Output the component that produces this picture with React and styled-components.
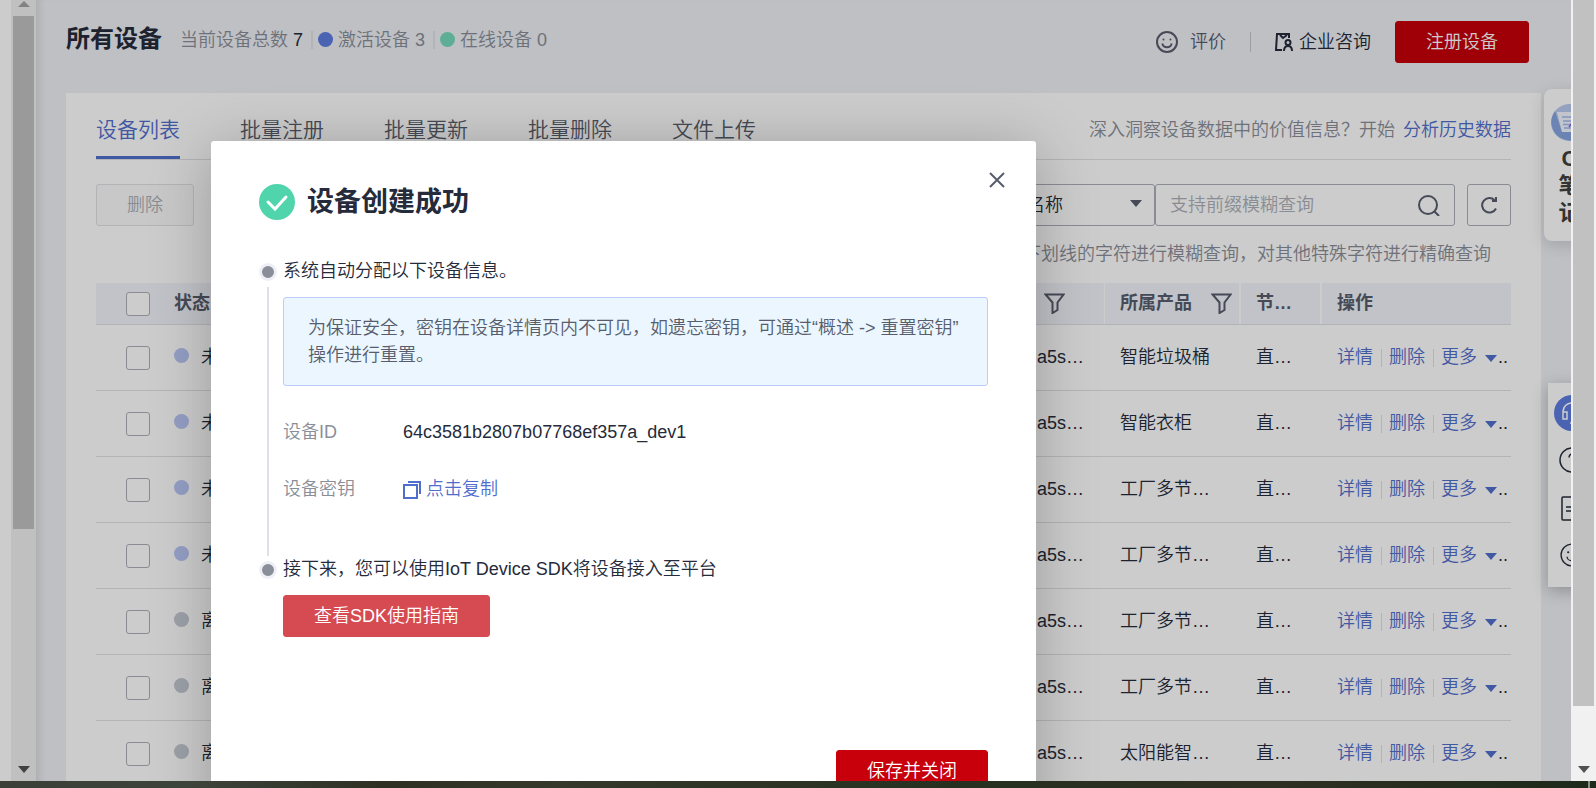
import React from 'react';
import styled, { createGlobalStyle } from 'styled-components';

const GlobalStyle = createGlobalStyle`
  * {
    box-sizing: border-box;
  }
  body {
    margin: 0;
    overflow: hidden;
    font-family: 'Liberation Sans', 'Noto Sans CJK SC', sans-serif;
    font-size: 18px;
    font-weight: 350;
    line-height: 27px;
    color: #252b3a;
  }
  h1, h2, p, ul, ol, dl, dd {
    margin: 0;
    padding: 0;
    list-style: none;
  }
  button, input, select {
    font: inherit;
    color: inherit;
    margin: 0;
  }
  button {
    cursor: pointer;
    padding: 0;
    border: none;
    background: none;
  }
  a {
    color: #526ecc;
    text-decoration: none;
  }
  svg {
    display: block;
    flex: none;
  }
`;

const Screen = styled.div`
  height: 100vh;
  display: flex;
  flex-direction: column;
`;

const Desktop = styled.div`
  flex: 1;
  min-height: 0;
  display: flex;
`;

const DeskEdge = styled.div`
  flex: none;
  height: 7px;
  padding-right: 6px;
  display: flex;
  justify-content: flex-end;
  background: linear-gradient(90deg, #3a4038 0%, #3d443b 12%, #2e3023 24%, #35392a 35%, #263021 60%, #2f3022 80%, #1d2a1b 100%);

  span {
    width: 2px;
    background: #8b8f88;
  }
`;

const Viewport = styled.div`
  flex: 1;
  min-width: 0;
  display: flex;
  position: relative;
  overflow: hidden;
`;

const Gutter = styled.div`
  flex: none;
  width: 11px;
  background: #fff;
`;

const ScrollTrack = styled.div`
  flex: none;
  width: 25px;
  padding: ${(p) => (p.$top ? '1px 2px 8px' : '0 2px 8px')};
  display: flex;
  flex-direction: column;
  align-items: center;
  justify-content: space-between;
  background: #f1f1f1;
`;

const ScrollThumb = styled.div`
  width: 100%;
  height: ${(p) => p.$height};
  margin-top: ${(p) => (p.$top ? '8px' : '0')};
  margin-bottom: auto;
  background: #c1c1c1;
`;

const Page = styled.main`
  flex: 1;
  min-width: 0;
  position: relative;
  overflow: hidden;
  padding: 0 30px;
  background: #eef0f5;
  box-shadow: inset 8px 0 8px -6px rgba(0, 0, 0, 0.12);
`;

const PageHeader = styled.header`
  height: 93px;
  padding: 0 12px 9px 0;
  display: flex;
  align-items: center;
  justify-content: space-between;
`;

const HeaderInfo = styled.div`
  display: flex;
  align-items: center;
  padding-bottom: 4px;

  h1 {
    margin-right: 18px;
    padding-bottom: 4px;
    font-size: 24px;
    font-weight: 700;
  }
`;

const Stats = styled.ul`
  display: flex;
  align-items: center;
  color: #8a8e99;

  li {
    display: flex;
    align-items: center;
    gap: 5px;
  }
  li + li {
    margin-left: 8px;
  }
  li + li::before {
    content: '';
    width: 2px;
    height: 18px;
    background: #dfe1e6;
  }
`;

const Total = styled.span`
  color: #252b3a;
`;

const Dot = styled.i`
  flex: none;
  width: 15px;
  height: 15px;
  margin-bottom: ${(p) => (p.$raised ? '4px' : '2px')};
  border-radius: 50%;
  background: ${(p) => p.$color};
`;

const HeaderActions = styled.div`
  display: flex;
  align-items: center;
`;

const TextAction = styled.button`
  display: flex;
  align-items: center;
  gap: ${(p) => p.$gap}px;
  color: ${(p) => p.$color};
`;

const ActionDivider = styled.span`
  width: 1px;
  height: 20px;
  margin: 0 24px;
  background: #c3c5cb;
`;

const Button = styled.button`
  flex: none;
  height: 42px;
  padding: 0 30px;
  border: 1px solid ${(p) => p.$bg || '#c7000b'};
  border-radius: 3px;
  background: ${(p) => p.$bg || '#c7000b'};
  color: #fff;
`;

const RegisterButton = styled(Button)`
  margin-left: 24px;
`;

const DeleteButton = styled(Button)`
  border-color: #dfe1e6;
  background: #fafafa;
  color: #adb0b8;
`;

const Card = styled.section`
  height: 800px;
  padding: 0 30px;
  background: #fff;
`;

const TabBar = styled.nav`
  display: flex;
  justify-content: space-between;
  align-items: center;
  border-bottom: 1px solid #dfe1e6;

  ul {
    display: flex;
    gap: 60px;
  }
  p {
    padding-top: 8px;
    color: #8a8e99;
  }
  p a {
    margin-left: 8px;
  }
`;

const Tab = styled.button`
  height: 66px;
  padding-top: 10px;
  border-bottom: 3px solid ${(p) => (p.$active ? '#526ecc' : 'transparent')};
  font-size: 21px;
  color: ${(p) => (p.$active ? '#526ecc' : '#575d6c')};
`;

const Toolbar = styled.div`
  margin-top: 24px;
  display: flex;
  justify-content: space-between;
`;

const Filters = styled.form`
  display: flex;
`;

const SelectBox = styled.label`
  position: relative;
  width: 180px;

  select {
    appearance: none;
    width: 100%;
    height: 42px;
    padding: 0 15px;
    border: 1px solid #adb0b8;
    border-radius: 3px;
    background: #fff;
  }
  svg {
    position: absolute;
    top: 16px;
    right: 13px;
    pointer-events: none;
  }
`;

const SearchBox = styled.div`
  width: 300px;
  height: 42px;
  padding: 0 14px;
  display: flex;
  align-items: center;
  border: 1px solid #adb0b8;
  border-radius: 3px;

  input {
    flex: 1;
    min-width: 0;
    padding: 0;
    border: none;
    outline: none;
    background: none;
  }
  input::placeholder {
    color: #adb0b8;
    opacity: 1;
  }
`;

const RefreshButton = styled.button`
  width: 44px;
  height: 42px;
  margin-left: 12px;
  display: flex;
  align-items: center;
  justify-content: center;
  border: 1px solid #adb0b8;
  border-radius: 3px;
`;

const Hint = styled.p`
  margin: 15px 0;
  padding-right: 20px;
  text-align: right;
  color: #8a8e99;
`;

const DeviceTable = styled.table`
  width: 100%;
  table-layout: fixed;
  border-collapse: separate;
  border-spacing: 0;

  th, td {
    padding: 0 0 0 15px;
    border-bottom: 1px solid #dfe1e6;
    text-align: left;
    white-space: nowrap;
    overflow: hidden;
  }
  th {
    height: 42px;
    background: #f2f4fa;
    font-weight: 700;
    color: #575d6c;
  }
  th:nth-child(3) {
    box-shadow: inset -1px 0 0 #fff;
  }
  th:nth-child(4), th:nth-child(5) {
    box-shadow: inset -2px 0 0 #fff;
  }
  td {
    height: 66px;
  }
`;

const Col = styled.col`
  width: ${(p) => p.$width || 'auto'};
`;

const CheckCell = styled.td`
  && {
    padding: 0 0 0 30px;
  }
`;

const Checkbox = styled.input.attrs({ type: 'checkbox' })`
  appearance: none;
  display: block;
  width: 24px;
  height: 24px;
  margin: 0;
  border: 1px solid #adb0b8;
  border-radius: 3px;
  background: #fff;
`;

const Status = styled.span`
  display: flex;
  align-items: center;
  gap: 12px;
`;

const HeadLabel = styled.span`
  display: flex;
  align-items: center;
  justify-content: ${(p) => (p.$end ? 'flex-end' : 'space-between')};
  padding-right: ${(p) => p.$end || 9}px;
`;

const IdCell = styled.td`
  && {
    padding-right: 21px;
    text-align: right;
  }
`;

const RowActions = styled.span`
  display: flex;
  align-items: center;

  a + a {
    margin-left: 8px;
    padding-left: 8px;
    background: linear-gradient(#dfe1e6, #dfe1e6) left center / 1px 18px no-repeat;
  }
  svg {
    margin: 2px 1px 0 8px;
  }
`;

const NotePanel = styled.aside`
  position: absolute;
  top: 89px;
  right: -24px;
  width: 51px;
  height: 152px;
  padding-top: 15px;
  display: flex;
  flex-direction: column;
  align-items: center;
  border-radius: 8px;
  background: #fff;
  box-shadow: 0 4px 16px rgba(0, 0, 0, 0.15);
  font-size: 22px;
  font-weight: 700;
  color: #404040;

  svg {
    margin-bottom: 4px;
  }
`;

const HelpPanel = styled.aside`
  position: absolute;
  top: 383px;
  right: -25px;
  width: 48px;
  height: 204px;
  padding-top: 12px;
  display: flex;
  flex-direction: column;
  align-items: center;
  gap: 22px;
  background: #fff;
  box-shadow: 0 4px 16px rgba(0, 0, 0, 0.25);

  button:first-child {
    margin-bottom: -6px;
  }
`;

const Overlay = styled.div`
  position: absolute;
  inset: 0;
  padding: 141px 0 0 211px;
  background: rgba(0, 0, 0, 0.2);
`;

const Modal = styled.div`
  position: relative;
  width: 100%;
  max-width: 825px;
  height: 700px;
  padding: 43px 48px 0;
  display: flex;
  flex-direction: column;
  border-radius: 3px;
  background: #fff;
  box-shadow: 0 8px 60px rgba(0, 0, 0, 0.25);
`;

const CloseButton = styled.button`
  position: absolute;
  top: 31px;
  right: 31px;
`;

const ModalTitle = styled.h2`
  display: flex;
  align-items: center;
  gap: 12px;
  font-size: 27px;
  font-weight: 700;
  line-height: 36px;
`;

const Steps = styled.ol`
  margin-top: 38px;
`;

const Step = styled.li`
  display: grid;
  grid-template-columns: 18px 1fr;
  column-gap: 6px;
  min-height: ${(p) => (p.$line ? '298px' : '0')};
`;

const Marker = styled.div`
  display: flex;
  flex-direction: column;
  align-items: center;
  gap: 6px;
  padding-top: 5px;

  i {
    width: 18px;
    height: 18px;
    border: 3px solid #eef0f5;
    border-radius: 50%;
    background: #8a8e99;
  }
  span {
    flex: 1;
    width: 2px;
    background: #dfe1e6;
  }
`;

const Notice = styled.p`
  margin-top: 12px;
  padding: 17px 24px 16px;
  border: 1px solid #beccfa;
  border-radius: 3px;
  background: #ebf6ff;
  color: #575d6c;
`;

const Fields = styled.dl`
  margin-top: 33px;
  display: grid;
  grid-template-columns: 120px 1fr;
  row-gap: 30px;

  dt {
    color: #8a8e99;
  }
`;

const CopyButton = styled.button`
  display: flex;
  align-items: center;
  gap: 5px;
  color: #526ecc;
`;

const GuideButton = styled(Button)`
  margin-top: 12px;
`;

const ModalFooter = styled.footer`
  margin-top: 113px;
  display: flex;
  justify-content: flex-end;
`;

const devices = [
  { status: '未激活', product: '智能垃圾桶' },
  { status: '未激活', product: '智能衣柜' },
  { status: '未激活', product: '工厂多节…' },
  { status: '未激活', product: '工厂多节…' },
  { status: '离线', product: '工厂多节…' },
  { status: '离线', product: '工厂多节…' },
  { status: '离线', product: '太阳能智…' },
];

const tabs = ['设备列表', '批量注册', '批量更新', '批量删除', '文件上传'];

function Triangle({ color, up }) {
  return (
    <svg width="12" height="7" viewBox="0 0 12 7" fill={color}>
      <path d={up ? 'M0 6L6 0l6 6z' : 'M0 0h12L6 7z'} />
    </svg>
  );
}

function Smile({ size, color, width = 2 }) {
  return (
    <svg width={size} height={size} viewBox="0 0 22 22" fill="none" stroke={color} strokeWidth={width}>
      <circle cx="11" cy="11" r="10" />
      <path d="M6.500 12.500a4.500 3.800 0 0 0 9 0" />
      <circle cx="7.500" cy="8.500" r="1" fill={color} stroke="none" />
      <circle cx="14.500" cy="8.500" r="1" fill={color} stroke="none" />
    </svg>
  );
}

function Funnel() {
  return (
    <svg width="21" height="21" viewBox="0 0 21 21" fill="none" stroke="#575d6c" strokeWidth="2">
      <path d="M1.5 1.5h18l-6 8v7.5l-5 3V9.500z" />
    </svg>
  );
}

function Devices() {
  return (
    <DeviceTable>
      <colgroup>
        <Col $width="63px" />
        <Col />
        <Col $width="220px" />
        <Col $width="136px" />
        <Col $width="81px" />
        <Col $width="189px" />
      </colgroup>
      <thead>
        <tr>
          <CheckCell as="th"><Checkbox aria-label="全选" /></CheckCell>
          <th>状态</th>
          <th><HeadLabel $end={40}><Funnel /></HeadLabel></th>
          <th><HeadLabel>所属产品<Funnel /></HeadLabel></th>
          <th>节…</th>
          <th>操作</th>
        </tr>
      </thead>
      <tbody>
        {devices.map((d, i) => (
          <tr key={i}>
            <CheckCell><Checkbox aria-label={'选择设备' + (i + 1)} /></CheckCell>
            <td>
              <Status>
                <Dot $raised $color={d.status === '离线' ? '#c3c8d2' : '#b9c6f5'} />
                {d.status}
              </Status>
            </td>
            <IdCell>a5s…</IdCell>
            <td>{d.product}</td>
            <td>直…</td>
            <td>
              <RowActions>
                <a href="#detail">详情</a>
                <a href="#delete">删除</a>
                <a href="#more">更多</a>
                <Triangle color="#526ecc" />
                ..
              </RowActions>
            </td>
          </tr>
        ))}
      </tbody>
    </DeviceTable>
  );
}

function SideTools() {
  return (
    <>
      <NotePanel>
        <svg width="37" height="37" viewBox="0 0 37 37">
          <circle cx="18.500" cy="18.500" r="18.500" fill="#b9cbef" />
          <path d="M4 7A18.500 18.500 0 1 0 36 25L11 28z" fill="#86a5e2" />
          <path d="M6 8h26l-1 20H11z" fill="#f4f7ff" />
          <path d="M11 13h13M12 17h12M12 20.500h12M13 24h11" stroke="#a3bcf0" strokeWidth="1.500" />
          <path d="M18 23l4-5" stroke="#7a5ff0" strokeWidth="1.500" />
        </svg>
        <span>C</span>
        <span>笔</span>
        <span>记</span>
      </NotePanel>
      <HelpPanel>
        <button aria-label="客服">
          <svg width="36" height="36" viewBox="0 0 36 36" fill="none" stroke="#fff" strokeWidth="1.500">
            <circle cx="18" cy="18" r="18" fill="#5e7ce0" stroke="none" />
            <path d="M9 17c0-12 18-12 18 0M9 17h4v7H9zM23 17h4v7h-4zM27 24c0 3-4 4-8 4M16 28h4" />
          </svg>
        </button>
        <button aria-label="帮助">
          <svg width="26" height="26" viewBox="0 0 26 26" fill="none" stroke="#252b3a" strokeWidth="1.500">
            <circle cx="13" cy="13" r="12" />
            <path d="M10 10.500c0-5 7-4 6.500 0-.3 2-3.500 2.500-3.500 5M13 18v2" />
          </svg>
        </button>
        <button aria-label="文档">
          <svg width="22" height="26" viewBox="0 0 22 26" fill="none" stroke="#252b3a" strokeWidth="1.500">
            <rect x="1" y="2" width="20" height="23" rx="1" />
            <path d="M5 12h9M5 16h9" />
          </svg>
        </button>
        <button aria-label="反馈"><Smile size={24} color="#252b3a" width={1.2} /></button>
      </HelpPanel>
    </>
  );
}

function CreatedModal() {
  return (
    <Modal role="dialog" aria-label="设备创建成功">
      <CloseButton aria-label="关闭">
        <svg width="16" height="16" viewBox="0 0 16 16" stroke="#575d6c" strokeWidth="2">
          <path d="M1 1l14 14M15 1L1 15" />
        </svg>
      </CloseButton>
      <ModalTitle>
        <svg width="36" height="36" viewBox="0 0 36 36" fill="none">
          <circle cx="18" cy="18" r="18" fill="#50d4ab" />
          <path d="M9 18l7 7 11-12" stroke="#fff" strokeWidth="3" strokeLinecap="round" />
        </svg>
        设备创建成功
      </ModalTitle>
      <Steps>
        <Step $line>
          <Marker><i /><span /></Marker>
          <div>
            <p>系统自动分配以下设备信息。</p>
            <Notice>
              为保证安全，密钥在设备详情页内不可见，如遗忘密钥，可通过“概述 -&gt; 重置密钥”<wbr />操作进行重置。
            </Notice>
            <Fields>
              <dt>设备ID</dt>
              <dd>64c3581b2807b07768ef357a_dev1</dd>
              <dt>设备密钥</dt>
              <dd>
                <CopyButton>
                  <svg width="18" height="18" viewBox="0 0 18 18" fill="none" stroke="#526ecc" strokeWidth="2">
                    <path d="M1 4h13v13H1zM5 1h12v12" />
                  </svg>
                  点击复制
                </CopyButton>
              </dd>
            </Fields>
          </div>
        </Step>
        <Step>
          <Marker><i /></Marker>
          <div>
            <p>接下来，您可以使用IoT Device SDK将设备接入至平台</p>
            <GuideButton $bg="#d64a52">查看SDK使用指南</GuideButton>
          </div>
        </Step>
      </Steps>
      <ModalFooter>
        <Button>保存并关闭</Button>
      </ModalFooter>
    </Modal>
  );
}

function App() {
  return (
    <Screen>
      <GlobalStyle />
      <Desktop>
        <Viewport>
          <Gutter />
          <ScrollTrack $top>
            <Triangle up color="#a3a3a3" />
            <ScrollThumb $top $height="513px" />
            <Triangle color="#505050" />
          </ScrollTrack>
          <Page>
            <PageHeader>
              <HeaderInfo>
                <h1>所有设备</h1>
                <Stats>
                  <li>当前设备总数 <Total>7</Total></li>
                  <li><Dot $color="#5e7ce0" />激活设备 <span>3</span></li>
                  <li><Dot $color="#76dabb" />在线设备 <span>0</span></li>
                </Stats>
              </HeaderInfo>
              <HeaderActions>
                <TextAction $gap={12} $color="#575d6c">
                  <Smile size={22} color="#575d6c" />
                  评价
                </TextAction>
                <ActionDivider />
                <TextAction $gap={6} $color="#252b3a">
                  <svg width="18" height="18" viewBox="0 0 18 18" fill="none" stroke="#252b3a" strokeWidth="2">
                    <path d="M7 17H1L2 1h12v4M5 2l3 3 4-3" />
                    <circle cx="13" cy="9.500" r="2.500" />
                    <path d="M9 18c0-4 2-5 4-5s4 1 4 5" />
                  </svg>
                  企业咨询
                </TextAction>
                <RegisterButton>注册设备</RegisterButton>
              </HeaderActions>
            </PageHeader>
            <Card>
              <TabBar>
                <ul>
                  {tabs.map((t, i) => (
                    <li key={t}><Tab $active={i === 0}>{t}</Tab></li>
                  ))}
                </ul>
                <p>深入洞察设备数据中的价值信息？开始<a href="#history">分析历史数据</a></p>
              </TabBar>
              <Toolbar>
                <DeleteButton>删除</DeleteButton>
                <Filters>
                  <SelectBox>
                    <select aria-label="查询条件">
                      <option>设备名称</option>
                    </select>
                    <Triangle color="#575d6c" />
                  </SelectBox>
                  <SearchBox>
                    <input aria-label="查询" placeholder="支持前缀模糊查询" />
                    <button type="button" aria-label="搜索">
                      <svg width="22" height="22" viewBox="0 0 22 22" fill="none" stroke="#575d6c" strokeWidth="2">
                        <circle cx="10" cy="11" r="9" />
                        <path d="M16 17l5 5" />
                      </svg>
                    </button>
                  </SearchBox>
                  <RefreshButton type="button" aria-label="刷新">
                    <svg width="18" height="18" viewBox="0 0 18 18" fill="none" stroke="#575d6c" strokeWidth="2">
                      <path d="M16 12.500A7.300 7.300 0 1 1 14.500 4M12 5h4V1" />
                    </svg>
                  </RefreshButton>
                </Filters>
              </Toolbar>
              <Hint>支持对中文、字母、数字、下划线的字符进行模糊查询，对其他特殊字符进行精确查询</Hint>
              <Devices />
            </Card>
            <SideTools />
          </Page>
          <Overlay>
            <CreatedModal />
          </Overlay>
        </Viewport>
        <ScrollTrack>
          <ScrollThumb $height="706px" />
          <Triangle color="#505050" />
        </ScrollTrack>
      </Desktop>
      <DeskEdge><span /></DeskEdge>
    </Screen>
  );
}

export default App;
